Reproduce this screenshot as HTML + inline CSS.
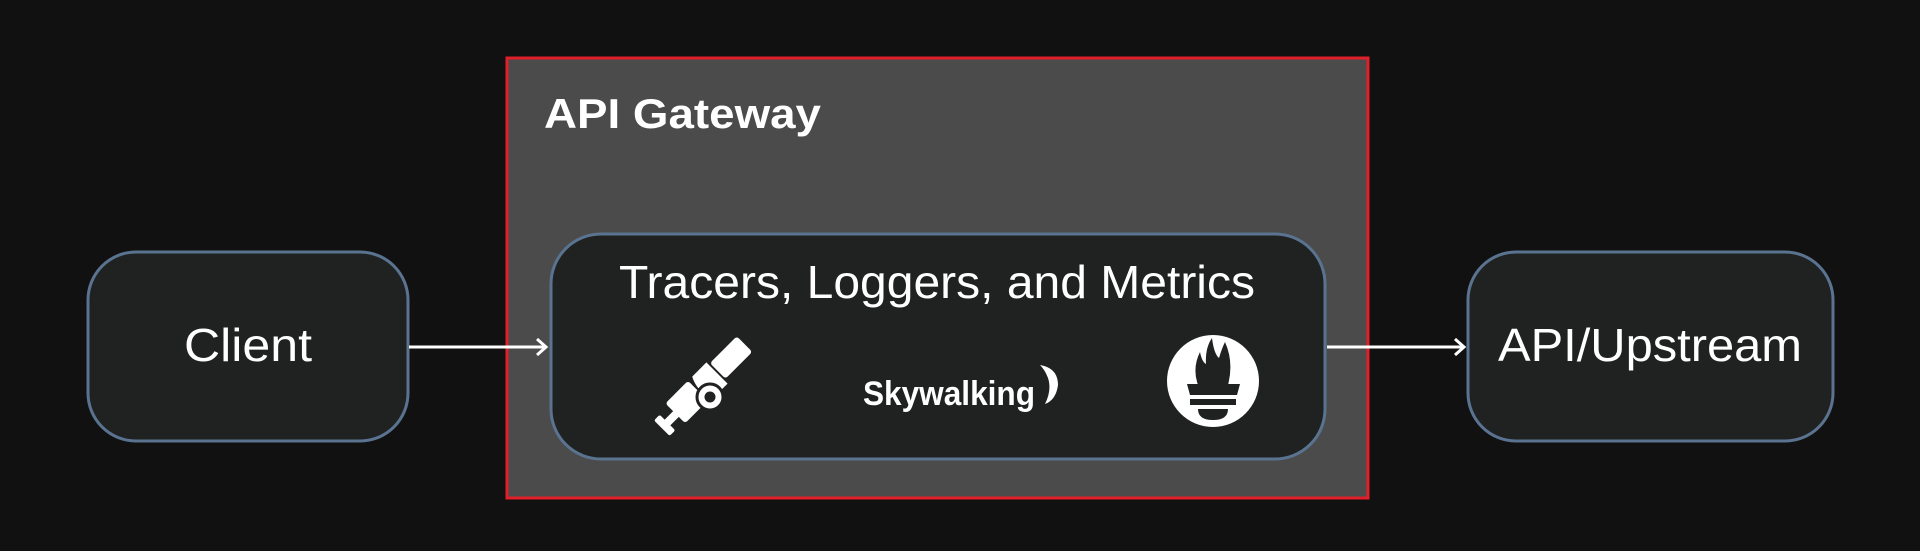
<!DOCTYPE html>
<html><head><meta charset="utf-8"><style>
html,body{margin:0;padding:0;background:#111111;width:1920px;height:551px;overflow:hidden;font-family:"Liberation Sans",sans-serif}
</style></head><body>
<svg width="1920" height="551" xmlns="http://www.w3.org/2000/svg">
<rect x="0" y="0" width="1920" height="551" fill="#111111"/>
<rect x="507" y="58" width="861" height="440" fill="#4a4b4a" stroke="#e01f2a" stroke-width="3"/>
<text x="544" y="128" fill="#fff" font-size="42" font-weight="bold" textLength="277" lengthAdjust="spacingAndGlyphs">API Gateway</text>
<rect x="88" y="252" width="320" height="189" rx="48" fill="#202121" stroke="#5a7390" stroke-width="3"/>
<text x="248" y="361" fill="#fff" font-size="46" text-anchor="middle" textLength="128" lengthAdjust="spacingAndGlyphs">Client</text>
<rect x="551" y="234" width="774" height="225" rx="50" fill="#202121" stroke="#5a7390" stroke-width="3"/>
<text x="937" y="298" fill="#fff" font-size="46" text-anchor="middle" textLength="636" lengthAdjust="spacingAndGlyphs">Tracers, Loggers, and Metrics</text>
<rect x="1468" y="252" width="365" height="189" rx="48" fill="#202121" stroke="#5a7390" stroke-width="3"/>
<text x="1650" y="361" fill="#fff" font-size="46" text-anchor="middle" textLength="304" lengthAdjust="spacingAndGlyphs">API/Upstream</text>
<g stroke="#fff" stroke-width="3" fill="none">
<line x1="409" y1="347" x2="545" y2="347"/><polyline points="537,339 546,347 537,355"/>
<line x1="1327" y1="347" x2="1463" y2="347"/><polyline points="1455,339 1464,347 1455,355"/>
</g>
<g transform="translate(700,390) rotate(-45)" fill="#fff">
<rect x="26" y="-12" width="38" height="22" rx="3"/>
<path d="M4,-15 L24,-15 L24,15 L4,15 Q-4,0 4,-15Z"/>
<rect x="-34" y="-15" width="32" height="28" rx="3"/>
<rect x="-48" y="-4" width="16" height="8"/>
<rect x="-54" y="-11" width="8" height="22" rx="2"/>
</g>
<circle cx="710" cy="397" r="13" fill="#fff" stroke="#202121" stroke-width="3"/>
<circle cx="710" cy="397" r="5.5" fill="#202121"/>
<text x="863" y="405" fill="#fff" font-size="34" font-weight="bold" textLength="172" lengthAdjust="spacingAndGlyphs">Skywalking</text>
<path d="M1040,365 Q1058,368 1058,385 Q1056,400 1045,404 Q1052,390 1048,378 Q1045,370 1040,365Z" fill="#fff"/>
<circle cx="1213" cy="381" r="46" fill="#fff"/>
<path d="M1187,384 L1240,384 L1237,395 L1190,395Z M1190,399 L1236,399 L1236,405 L1190,405Z M1198,409 L1228,409 Q1228,420 1213,420 Q1198,420 1198,409Z" fill="#202121"/>
<path d="M1198,385 Q1192,368 1200,352 Q1202,362 1206,364 Q1205,348 1212,338 Q1214,354 1219,358 Q1222,348 1225,342 Q1234,362 1228,385Z" fill="#202121"/>
</svg>
</body></html>
